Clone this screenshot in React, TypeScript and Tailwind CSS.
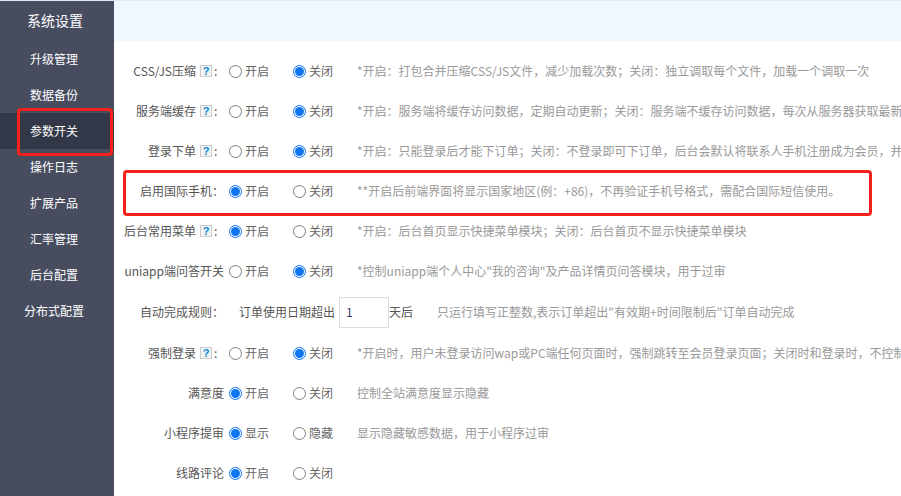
const menu = ["升级管理", "数据备份", "参数开关", "操作日志", "扩展产品", "汇率管理", "后台配置", "分布式配置"];

const rows = [
  { label: "CSS/JS压缩", help: true, on: false, desc: "*开启：打包合并压缩CSS/JS文件，减少加载次数；关闭：独立调取每个文件，加载一个调取一次" },
  { label: "服务端缓存", help: true, on: false, desc: "*开启：服务端将缓存访问数据，定期自动更新；关闭：服务端不缓存访问数据，每次从服务器获取最新" },
  { label: "登录下单", help: true, on: false, desc: "*开启：只能登录后才能下订单；关闭：不登录即可下订单，后台会默认将联系人手机注册成为会员，并" },
  { label: "启用国际手机：", on: true, desc: "**开启后前端界面将显示国家地区(例：+86)，不再验证手机号格式，需配合国际短信使用。" },
  { label: "后台常用菜单", help: true, on: true, desc: "*开启：后台首页显示快捷菜单模块；关闭：后台首页不显示快捷菜单模块" },
  { label: "uniapp端问答开关", on: false, desc: "*控制uniapp端个人中心\"我的咨询\"及产品详情页问答模块，用于过审" },
];

const rows2 = [
  { label: "强制登录", help: true, on: false, desc: "*开启时，用户未登录访问wap或PC端任何页面时，强制跳转至会员登录页面；关闭时和登录时，不控制" },
  { label: "满意度", on: true, desc: "控制全站满意度显示隐藏" },
  { label: "小程序提审", on: true, yes: "显示", no: "隐藏", desc: "显示隐藏敏感数据，用于小程序过审" },
  { label: "线路评论", on: true, desc: "" },
];

type RowData = { label: string; help?: boolean; on: boolean; yes?: string; no?: string; desc: string };

function Radio({ checked, text }: { checked: boolean; text: string }) {
  return (
    <div className="flex w-16 shrink-0 items-center gap-[3px] text-[#666]">
      {checked ? (
        <span className="flex h-[13px] w-[13px] items-center justify-center rounded-full border border-[#0d76f2] bg-white">
          <span className="h-[9px] w-[9px] rounded-full bg-[#0d76f2]" />
        </span>
      ) : (
        <span className="h-[13px] w-[13px] rounded-full border border-[#808080] bg-white" />
      )}
      <span>{text}</span>
    </div>
  );
}

function Row({ row }: { row: RowData }) {
  return (
    <div className="flex h-10 items-center">
      <div className="flex w-[110px] shrink-0 items-center justify-end text-[#555]">
        <span>{row.label}</span>
        {row.help && (
          <>
            <span className="ml-1 flex h-3 w-3 items-center justify-center border border-[#ccc] bg-[#f3f3f3] font-['Liberation_Sans'] text-[11px] leading-none font-bold text-[#0a8ad8]">
              ?
            </span>
            <span className="w-3 pl-0.5">:</span>
          </>
        )}
      </div>
      <div className="ml-[5px] flex shrink-0">
        <Radio checked={row.on} text={row.yes ?? "开启"} />
        <Radio checked={!row.on} text={row.no ?? "关闭"} />
      </div>
      <div className="whitespace-nowrap text-[#999]">{row.desc}</div>
    </div>
  );
}

export default function App() {
  return (
    <div className="relative flex h-[496px] w-[901px] overflow-hidden border-t border-[#e3e9f4] bg-white font-['Noto_Sans_CJK_SC','Noto_Sans',sans-serif] text-xs">
      <aside className="w-[114px] shrink-0 bg-[#474d5f] text-center text-white">
        <div className="flex h-10 items-center justify-center pr-1 pb-0.5 text-sm">系统设置</div>
        <div>
          {menu.map((m) => (
            <div
              key={m}
              className={
                m === "参数开关"
                  ? "flex h-9 items-center justify-center bg-[#333848] pr-1.5"
                  : "flex h-9 items-center justify-center pr-1.5"
              }
            >
              {m}
            </div>
          ))}
        </div>
      </aside>

      <main className="min-w-0 flex-1 overflow-hidden">
        <div className="h-10 bg-[#f1f7fe]" />
        <div className="pt-2.5">
          {rows.map((r) => (
            <Row key={r.label} row={r} />
          ))}
          <div className="flex h-[42px] items-center">
            <div className="w-[110px] shrink-0 text-right text-[#555]">自动完成规则：</div>
            <span className="ml-[15px] text-[#555]">订单使用日期超出</span>
            <div className="ml-1 flex h-[31px] w-[50px] items-center border border-[#ddd] pl-1.5 text-[#3a3a6a]">1</div>
            <span className="text-[#555]">天后</span>
            <span className="ml-6 whitespace-nowrap text-[#999]">只运行填写正整数,表示订单超出"有效期+时间限制后"订单自动完成</span>
          </div>
          {rows2.map((r) => (
            <Row key={r.label} row={r} />
          ))}
        </div>
      </main>

      <div className="absolute top-[107px] left-[17px] h-[48px] w-[96px] rounded-[4px] border-[3px] border-[#f5211a]" />
      <div className="absolute top-[169px] left-[123px] h-[46px] w-[749px] rounded-[4px] border-[3px] border-[#f5211a]" />
    </div>
  );
}
